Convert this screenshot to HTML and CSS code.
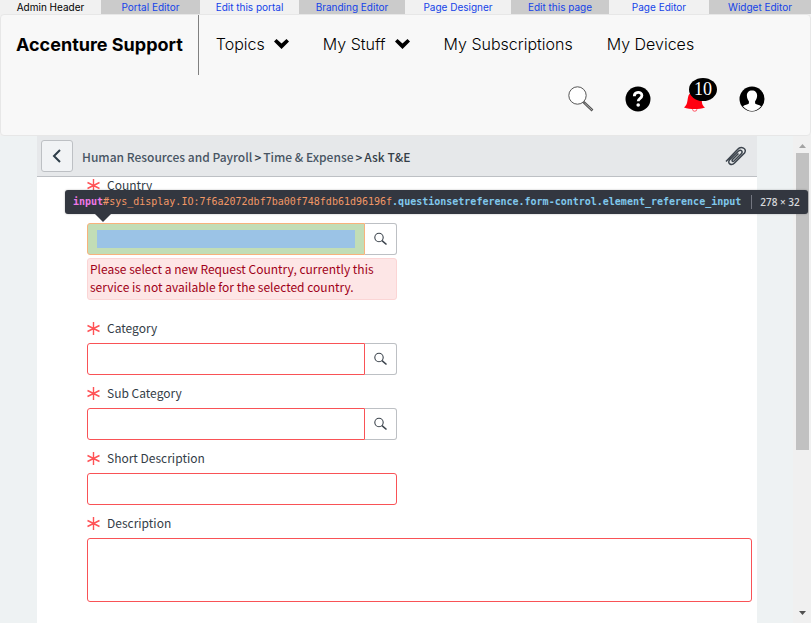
FILE: index.html
```html
<!DOCTYPE html>
<html lang="en">
<head>
<meta charset="utf-8">
<title>Accenture Support</title>
<link rel="stylesheet" href="styles.css">
</head>
<body>
<svg class="sprite" aria-hidden="true">
  <symbol id="star" viewBox="0 0 13 13"><path d="M6.500 0v13M.5 3.500l12 6M12.500 3.500l-12 6" fill="none" stroke="#ff5256" stroke-width="1.400"/></symbol>
  <symbol id="lens" viewBox="0 0 14 14"><circle cx="5" cy="5.500" r="4.200" fill="none" stroke="#3c444d" stroke-width="1.100"/><path d="M8 8.700l4.500 3.800" stroke="#3c444d" stroke-width="1.600"/></symbol>
  <symbol id="chevron" viewBox="0 0 15 10"><path d="M0 2.500L2.500 0l5 4.500 5-4.500L15 2.500 7.500 10z"/></symbol>
</svg>
<nav class="admin" aria-label="Admin">
  <span>Admin Header</span>
  <a href="#">Portal Editor</a>
  <a href="#">Edit this portal</a>
  <a href="#">Branding Editor</a>
  <a href="#">Page Designer</a>
  <a href="#">Edit this page</a>
  <a href="#">Page Editor</a>
  <a href="#">Widget Editor</a>
</nav>
<header class="navbar">
  <div class="menu">
    <a class="brand" href="#">Accenture Support</a>
    <a href="#">Topics <svg class="chevron"><use href="#chevron"/></svg></a>
    <a href="#">My Stuff <svg class="chevron"><use href="#chevron"/></svg></a>
    <a href="#">My Subscriptions</a>
    <a href="#">My Devices</a>
  </div>
  <div class="tools">
    <button aria-label="Search"><svg width="26" height="26" viewBox="0 0 26 26"><circle cx="9.500" cy="9.500" r="8.700" fill="#fff" stroke="#555" stroke-width="1"/><path d="M15.500 16l9 8.500" stroke="#555" stroke-width="2.600"/><path d="M16.500 17l7.500 7" stroke="#aaa" stroke-width="1"/></svg></button>
    <button aria-label="Help"><svg width="26" height="26" viewBox="0 0 26 26"><circle cx="13" cy="13" r="12.500"/><path d="M9.300 10.200c0-5 7.600-5 7.600-.7 0 3-3.700 2.600-3.700 5.800" fill="none" stroke="#fff" stroke-width="2.800"/><circle cx="13.200" cy="19" r="1.800" fill="#fff"/></svg></button>
    <button class="alerts" aria-label="Notifications"><svg width="26" height="26" viewBox="0 0 26 26"><path d="M2 21.500c4-3 3-7 4.500-12C8 5 18 5 19 10c1.500 6 0 8.500 4 11.500-6 2-15 2-21 0z" fill="#ff0010"/><path d="M10.500 23.200a2.200 2 0 0 0 4.400 0" fill="#fff" stroke="#ff5060"/></svg><span class="badge">10</span></button>
    <button aria-label="Profile"><svg width="26" height="26" viewBox="0 0 26 26"><circle cx="13" cy="13" r="12.500"/><path d="M13 4.500c3.500 0 5.300 2.300 5.100 5.500-.2 2.600-1 3.800-2 5.200v2.300c1.500 1.200 4 1.200 6 2.700C17 26.500 9 26.500 3.900 20.200c2-1.500 4.500-1.500 6-2.700v-2.300c-1-1.400-1.800-2.600-2-5.200-.2-3.200 1.600-5.500 5.100-5.500z" fill="#fff"/></svg></button>
  </div>
</header>
<div class="stage">
  <main class="card">
    <div class="titlebar">
      <button class="back" aria-label="Back"><svg width="10" height="14" viewBox="0 0 10 14"><path d="M8 1L2 7l6 6" fill="none" stroke="#2e3d49" stroke-width="2"/></svg></button>
      <div class="crumbs"><a href="#">Human Resources and Payroll</a><span>&gt;</span><a href="#">Time &amp; Expense</a><span>&gt;</span><span>Ask T&amp;E</span></div>
      <button class="clip" aria-label="Attach"><svg width="22" height="20" viewBox="0 0 22 20"><path d="M1 15.500L12.500 3.500C16-.5 22.500 2.500 19.500 7L9.500 17c-3 3.200-7.500.5-5-3L13.500 5c2.500-2 4.500.5 3 2.500L9 15c-1.500 1-2.500 0-1.500-1.500l6-6" fill="none" stroke="#3c444d" stroke-width="1.500"/></svg></button>
    </div>
    <form class="form">
      <label class="label first" for="country"><svg class="star"><use href="#star"/></svg>Country</label>
      <div class="group inspected">
        <input id="country" type="text">
        <button type="button" aria-label="Look up country"><svg class="lens"><use href="#lens"/></svg></button>
        <div class="tip"><code><b class="tag">input</b><span class="ident">#sys_display.IO:7f6a2072dbf7ba00f748fdb61d96196f</span><b class="cls">.questionsetreference.form-control.element_reference_input</b></code><span class="size">278 × 32</span></div>
      </div>
      <p class="error">Please select a new Request Country, currently this service is not available for the selected country.</p>
      <label class="label" for="category"><svg class="star"><use href="#star"/></svg>Category</label>
      <div class="group">
        <input id="category" type="text">
        <button type="button" aria-label="Look up category"><svg class="lens"><use href="#lens"/></svg></button>
      </div>
      <label class="label" for="sub"><svg class="star"><use href="#star"/></svg>Sub Category</label>
      <div class="group">
        <input id="sub" type="text">
        <button type="button" aria-label="Look up sub category"><svg class="lens"><use href="#lens"/></svg></button>
      </div>
      <label class="label" for="short"><svg class="star"><use href="#star"/></svg>Short Description</label>
      <div class="group single"><input id="short" type="text"></div>
      <label class="label" for="desc"><svg class="star"><use href="#star"/></svg>Description</label>
      <textarea id="desc"></textarea>
    </form>
  </main>
  <div class="scroll" aria-hidden="true">
    <svg width="7" height="4" viewBox="0 0 7 4"><path d="M0 4L3.500 0 7 4z" fill="#a3a3a3"/></svg>
    <div class="track"><div class="thumb"></div></div>
    <svg width="7" height="4" viewBox="0 0 7 4"><path d="M0 0h7L3.500 4z" fill="#505050"/></svg>
  </div>
</div>
</body>
</html>
```
FILE: styles.css
```css
* { box-sizing: border-box; }
body {
  margin: 0;
  height: 100vh;
  display: flex;
  flex-direction: column;
  overflow: hidden;
  background: #f1f1f1;
  color: #000;
  font-family: Inter, "Liberation Sans", sans-serif;
}
a { color: inherit; text-decoration: none; }
button { padding: 0; border: 0; background: none; font: inherit; display: flex; align-items: center; justify-content: center; }
.sprite { position: absolute; width: 0; height: 0; }

.admin {
  display: grid;
  grid-template-columns: 101fr 99fr 99fr 106fr 106fr 98fr 100fr 102fr;
  font-size: 10px;
  line-height: 14px;
  text-align: center;
}
.admin a { color: #1443e8; }
.admin :nth-child(even) { background: #cbcbcb; }

.navbar {
  flex: none;
  background: #f8f8f8;
  border: 1px solid #e7e7e7;
  border-radius: 4px;
  padding-bottom: 17px;
}
.menu { display: flex; height: 60px; font-size: 16px; font-weight: 300; }
.menu a { display: flex; align-items: center; gap: 9px; padding: 0 17px 2px; white-space: nowrap; }
.menu .brand { padding-left: 15px; padding-right: 15px; border-right: 1px solid #808080; font-size: 18px; font-weight: 700; }
.chevron { width: 15px; height: 10px; }
.tools { display: flex; justify-content: flex-end; align-items: center; gap: 31px; height: 43px; padding-right: 45px; padding-top: 5px; }
.alerts { position: relative; }
.badge {
  position: absolute;
  left: 7px;
  top: -8px;
  width: 28px;
  height: 23px;
  border-radius: 50%;
  background: #000;
  color: #fff;
  font: 18px/23px "Liberation Serif", serif;
}

.stage { flex: 1; min-height: 0; display: flex; background: #eef2f3; }
.card {
  flex: 1;
  margin: 0 36px 0 37px;
  background: #fff;
  color: #343d47;
  font-family: "Noto Sans CJK SC", "Noto Sans", sans-serif;
  font-size: 12px;
}
.titlebar { display: flex; align-items: center; height: 41px; padding: 0 10px 0 4px; background: #e6e8ea; border-bottom: 1px solid #bdc0c4; }
.back { width: 32px; height: 32px; border: 1px solid #bdc0c4; border-radius: 3px; background: #f1f3f5; }
.crumbs { flex: 1; display: flex; gap: 2px; padding-left: 9px; font-weight: 500; white-space: nowrap; }
.crumbs a { color: #485563; }

.form { padding: 0 5px 0 50px; }
.label { display: flex; align-items: center; gap: 7px; padding: 10px 0 7px; line-height: 16px; }
.label.first { padding: 0 0 30px; }
.star { width: 13px; height: 13px; }
.lens { width: 14px; height: 14px; }
.group { position: relative; display: flex; max-width: 310px; height: 32px; }
input, textarea { font: inherit; border: 1px solid #f95256; background: #fff; padding: 6px 9px; }
.group input { flex: 1; min-width: 0; border-radius: 3px 0 0 3px; }
.group.single input { border-radius: 3px; }
.group button { width: 32px; border: 1px solid #bdc0c4; border-left: 0; border-radius: 0 3px 3px 0; }
textarea { display: block; width: 100%; height: 64px; border-radius: 3px; resize: none; }
.inspected input { border-color: #f8b27c; background: linear-gradient(#9bc3e6, #9bc3e6) content-box, #c2ddb6; }
.error {
  max-width: 310px;
  margin: 3px 0 10px;
  padding: 1px 2px 3px;
  border: 1px solid #fbd5d5;
  border-radius: 3px;
  background: #fde6e6;
  color: #a00018;
  line-height: 18px;
}

.tip {
  position: absolute;
  z-index: 2;
  left: -22px;
  top: -33px;
  display: flex;
  align-items: center;
  height: 24px;
  padding: 0 8px;
  border-radius: 3px;
  background: #333740;
  box-shadow: 0 0 2px rgba(0, 0, 0, .3);
  white-space: nowrap;
}
.tip::after { content: ""; position: absolute; left: 30px; top: 24px; border: 8px solid transparent; border-top-color: #333740; border-bottom: 0; }
.tip code { font: 10px/14px "DejaVu Sans Mono", monospace; }
.tag { color: #ee78e6; }
.ident { color: #f29766; }
.cls { color: #80c8ec; }
.size { margin-left: 10px; padding-left: 8px; border-left: 1px solid #737680; color: #d6d8dc; font: 600 10px/14px "Open Sans", sans-serif; }

.scroll { width: 18px; display: flex; flex-direction: column; align-items: center; padding: 8px 0; background: #f0f0f0; }
.track { flex: 1; align-self: stretch; margin: 5px 2px 8px 3px; }
.thumb { height: 66%; background: #c1c1c1; }
```
